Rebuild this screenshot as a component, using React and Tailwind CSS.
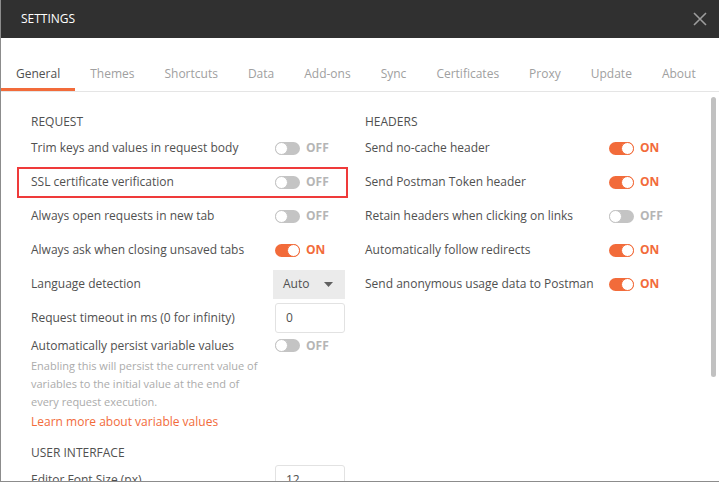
import React from "react";

const tabs = ["General", "Themes", "Shortcuts", "Data", "Add-ons", "Sync", "Certificates", "Proxy", "Update", "About"];

const Toggle = ({ on }) => (
  <div className="flex items-center gap-[6px]">
    <div
      className={`w-[25px] h-[13px] rounded-full flex items-center ${
        on ? "bg-[#f26b3a] justify-end" : "bg-[#c4c4c4] justify-start"
      }`}
    >
      <div
        className={`w-[13px] h-[13px] rounded-full bg-white border ${
          on ? "border-[#f26b3a]" : "border-[#c4c4c4]"
        }`}
      />
    </div>
    <span className={`text-[12px] font-bold ${on ? "text-[#f26b3a]" : "text-[#b5b5b5]"}`}>
      {on ? "ON" : "OFF"}
    </span>
  </div>
);

const Row = ({ label, children, boxed }) => (
  <div className="relative shrink-0 flex items-center h-[34px]">
    <div className="w-[244px] text-[12px] text-[#505050]">{label}</div>
    {children}
    {boxed && (
      <div className="absolute left-[-14px] top-[2px] w-[331px] h-[31px] border-2 border-[#ef3a3a]" />
    )}
  </div>
);

const Heading = ({ children }) => (
  <div className="shrink-0 h-[16px] leading-[16px] text-[12px] text-[#505050] uppercase">{children}</div>
);

export default function App() {
  return (
    <div
      className="w-[719px] h-[482px] overflow-hidden bg-white flex flex-col border-l border-b border-[#8c8c8c]"
      style={{ fontFamily: '"Open Sans", "Liberation Sans", sans-serif' }}
    >
      {/* title bar */}
      <div className="h-[38px] shrink-0 bg-[#303030] flex items-center justify-between pl-[20px] pr-[11px]">
        <span className="text-[12px] text-white">SETTINGS</span>
        <svg width="16" height="16" viewBox="0 0 16 16" className="text-[#9c9c9c]">
          <path d="M2 2 L14 14 M14 2 L2 14" stroke="currentColor" strokeWidth="1.6" />
        </svg>
      </div>

      {/* tabs */}
      <div className="h-[54px] shrink-0 flex items-end border-b border-[#e5e5e5]">
        {tabs.map((t, i) => (
          <div
            key={t}
            className={`h-[26px] flex items-start px-[15px] text-[12px] border-b-[3px] ${
              i === 0 ? "border-[#f26b3a] text-[#505050]" : "border-transparent text-[#a0a0a0]"
            }`}
          >
            {t}
          </div>
        ))}
      </div>

      {/* body */}
      <div className="flex-1 flex min-h-0">
        <div className="flex-1 flex pl-[30px] pt-[22px] overflow-hidden">
          {/* left column */}
          <div className="w-[334px] flex flex-col">
            <Heading>Request</Heading>
            <div className="h-px shrink-0" />
            <Row label="Trim keys and values in request body">
              <Toggle on={false} />
            </Row>
            <Row label="SSL certificate verification" boxed>
              <Toggle on={false} />
            </Row>
            <Row label="Always open requests in new tab">
              <Toggle on={false} />
            </Row>
            <Row label="Always ask when closing unsaved tabs">
              <Toggle on />
            </Row>
            <Row label="Language detection">
              <div className="ml-[-2px] w-[72px] h-[29px] bg-[#ebebeb] flex items-center justify-between pl-[10px] pr-[12px] text-[12px] text-[#505050]">
                <span>Auto</span>
                <svg width="9" height="5" viewBox="0 0 9 5">
                  <path d="M0 0 H9 L4.5 5 Z" fill="#606060" />
                </svg>
              </div>
            </Row>
            <Row label="Request timeout in ms (0 for infinity)">
              <div className="w-[70px] h-[30px] border border-[#e2e2e2] rounded-[3px] flex items-center pl-[10px] text-[12px] text-[#505050]">
                0
              </div>
            </Row>
            <div className="shrink-0 flex items-center h-[21px]">
              <div className="w-[244px] text-[12px] text-[#505050]">Automatically persist variable values</div>
              <Toggle on={false} />
            </div>
            <div className="shrink-0 w-[232px] mt-[1px] text-[11px] leading-[18px] text-[#ababab]">
              Enabling this will persist the current value of variables to the initial value at the end of every request execution.
            </div>
            <div className="shrink-0 text-[12px] leading-[20px] mt-[1px] text-[#f26b3a]">Learn more about variable values</div>
            <div className="h-[13px] shrink-0" />
            <Heading>User Interface</Heading>
            <div className="shrink-0 flex items-start h-[34px] mt-[4px]">
              <div className="w-[244px] text-[12px] text-[#505050] pt-[6px]">Editor Font Size (px)</div>
              <div className="w-[70px] h-[30px] border border-[#e2e2e2] rounded-[3px] flex items-center pl-[10px] text-[12px] text-[#505050]">
                12
              </div>
            </div>
          </div>

          {/* right column */}
          <div className="w-[334px] flex flex-col">
            <Heading>Headers</Heading>
            <div className="h-px shrink-0" />
            <Row label="Send no-cache header">
              <Toggle on />
            </Row>
            <Row label="Send Postman Token header">
              <Toggle on />
            </Row>
            <Row label="Retain headers when clicking on links">
              <Toggle on={false} />
            </Row>
            <Row label="Automatically follow redirects">
              <Toggle on />
            </Row>
            <Row label="Send anonymous usage data to Postman">
              <Toggle on />
            </Row>
          </div>
        </div>

        {/* scrollbar */}
        <div className="w-[10px] shrink-0 pt-[5px] pl-[2px]">
          <div className="w-[5px] h-[280px] rounded-full bg-[#c1c1c1]" />
        </div>
      </div>
    </div>
  );
}
